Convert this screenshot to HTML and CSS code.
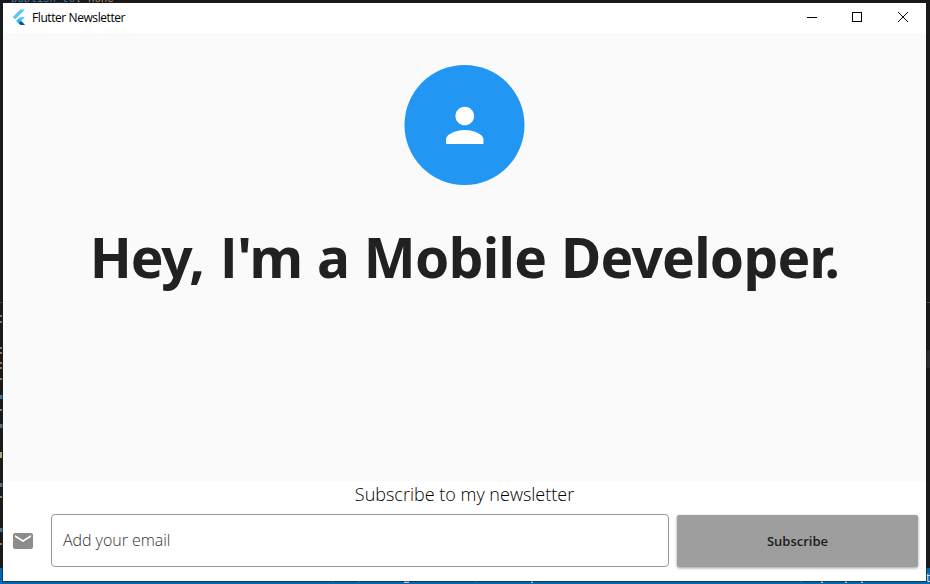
FILE: index.html
```html
<!DOCTYPE html>
<html lang="en">
<head>
<meta charset="utf-8">
<title>Flutter Newsletter</title>
<link rel="stylesheet" href="styles.css">
</head>
<body>
<div class="desktop">
  <div class="code-line"><span class="key">publish_to</span>: <span class="value">none</span></div>
  <div class="rule"></div>
  <div class="active-line"></div>
  <i class="bit" style="top:315px"></i><i class="bit" style="top:321px"></i>
  <i class="bit warm" style="top:347px"></i><i class="bit warm" style="top:352px"></i>
  <i class="bit warm" style="top:362px"></i><i class="bit warm" style="top:367px"></i>
  <i class="bit warm" style="top:378px"></i><i class="bit cool" style="top:395px"></i>
  <i class="bit warm" style="top:409px"></i><i class="bit cool" style="top:424px"></i>
  <i class="bit tall" style="top:452px"></i><i class="bit cool" style="top:483px"></i>
  <i class="bit warm" style="top:496px"></i><i class="bit cool" style="top:528px"></i>
  <i class="bit warm" style="top:543px"></i>
  <div class="statusbar">
    <i class="mark" style="left:332px"></i><i class="mark" style="left:358px"></i><i class="mark low" style="left:404px"></i>
    <i class="mark" style="left:475px"></i><i class="mark low narrow" style="left:531px"></i><i class="mark" style="left:800px"></i>
    <i class="mark low narrow" style="left:821px"></i><i class="mark low narrow" style="left:845px"></i><i class="mark low narrow" style="left:861px"></i>
    <span class="status-text">t</span>
  </div>
</div>
<div class="window">
  <header class="titlebar">
    <svg class="logo" width="14" height="17" viewBox="0 0 14 17">
      <path fill="#54c5f8" d="M8.500.5H13L3.200 10.200.8 8z"/>
      <path fill="#54c5f8" d="M8.500 8H13L9.100 11.800 13 16H8.500L4.300 11.900z"/>
      <path fill="#29b6f6" d="M4.300 11.900l2.400-2.400 2.400 2.400-2.400 2.400z"/>
      <path fill="#01579b" d="M6.700 14.300l2.400-2.400L13 16H8.500z"/>
    </svg>
    <span class="title">Flutter Newsletter</span>
    <svg class="control" width="46" height="30" viewBox="0 0 46 30" shape-rendering="crispEdges"><path d="M19 14.500h10" stroke="#000"/></svg>
    <svg class="control" width="46" height="30" viewBox="0 0 46 30" shape-rendering="crispEdges"><path d="M18.500 9.500h9v9h-9z" stroke="#000" fill="none"/></svg>
    <svg class="control" width="46" height="30" viewBox="0 0 46 30"><path d="M18 9l10 10M28 9L18 19" stroke="#000"/></svg>
  </header>
  <main class="hero">
    <svg class="avatar" width="121" height="120" viewBox="0 0 121 120">
      <circle cx="60.5" cy="60" r="60" fill="#2196f3"/>
      <path transform="translate(32.800 32.300) scale(2.3333)" fill="#fff" d="M12 12c2.210 0 4-1.790 4-4s-1.790-4-4-4-4 1.790-4 4 1.790 4 4 4zm0 2c-2.670 0-8 1.340-8 4v2h16v-2c0-2.660-5.330-4-8-4z"/>
    </svg>
    <h1 class="headline"><span class="hey">Hey,</span> <span class="stem">I</span>'m a Mobile <span class="developer">Developer.</span></h1>
  </main>
  <footer class="newsletter">
    <p class="caption">Subscribe to my newsletter</p>
    <form class="signup">
      <svg class="mail" width="24" height="24" viewBox="0 0 24 24"><path fill="#8c8c8c" d="M20 4H4c-1.100 0-1.990.9-1.990 2L2 18c0 1.100.9 2 2 2h16c1.100 0 2-.9 2-2V6c0-1.100-.9-2-2-2zm0 4l-8 5-8-5V6l8 5 8-5v2z"/></svg>
      <div class="field"><span class="hint">Add your email</span></div>
      <button class="subscribe" type="button">Subscribe</button>
    </form>
  </footer>
</div>
</body>
</html>
```
FILE: styles.css
```css
* { box-sizing: border-box; }
body {
  margin: 0;
  width: 930px;
  height: 584px;
  padding: 3px 4px 3px 3px;
  overflow: hidden;
  background: #1a1a1a;
  font-family: "Open Sans", "Noto Sans", sans-serif;
}
.desktop { position: absolute; inset: 0; overflow: hidden; }
.code-line {
  position: absolute;
  left: 11px;
  top: -8px;
  font: 10.700px/14px "Liberation Mono", monospace;
  color: #aaa;
  white-space: pre;
}
.key { color: #3d80b5; }
.value { color: #c0886d; }
.rule { position: absolute; top: 302px; width: 100%; height: 1px; background: #444; }
.active-line { position: absolute; right: 0; top: 350px; width: 4px; height: 18px; background: #2b2b2f; }
.bit { position: absolute; left: 0; width: 2px; height: 2px; background: #777; }
.warm { background: #a57848; }
.cool { background: #4d7191; height: 4px; width: 3px; }
.tall { background: #a8a584; height: 6px; }
.statusbar { position: absolute; left: 0; right: 0; top: 568px; bottom: 0; background: #0067b0; }
.mark { position: absolute; top: 13px; width: 2px; height: 1px; background: #7194a9; }
.low { width: 5px; height: 2px; background: #b7c6ce; }
.narrow { width: 2px; }
.status-text { position: absolute; left: 926px; top: 2px; font-size: 12px; line-height: 15px; color: #d5e5ef; }
.window {
  position: relative;
  display: flex;
  flex-direction: column;
  width: 923px;
  height: 578px;
  background: #fff;
  box-shadow: 0 0 0 1px rgba(30, 30, 30, .6);
}
.titlebar { display: flex; flex: 0 0 30px; align-items: center; padding-left: 9px; }
.logo { flex: none; margin-top: -1px; }
.title {
  flex: 1;
  margin-left: 6px;
  font-size: 12px;
  line-height: 16px;
  letter-spacing: -.42px;
  color: #000;
}
.control { flex: none; }
.hero {
  display: flex;
  flex: 0 0 448px;
  flex-direction: column;
  align-items: center;
  padding-top: 32px;
  background: #fafafa;
}
.avatar { flex: none; }
.headline {
  margin: 34px 0 0;
  font: 700 55px/75px "Noto Sans", "Open Sans", sans-serif;
  letter-spacing: -.7px;
  word-spacing: 1px;
  white-space: nowrap;
  color: #212121;
}
.hey { letter-spacing: -1.200px; }
.stem { font-family: Roboto, sans-serif; margin: 0 1px 0 2.500px; }
.developer { letter-spacing: -.75px; }
.newsletter { flex: 1; }
.caption {
  margin: -1px 0 0;
  text-align: center;
  font-size: 18px;
  line-height: 28px;
  font-weight: 300;
  color: #000;
}
.signup { display: flex; align-items: center; margin: 6px 8px 0; height: 53px; }
.mail { flex: none; }
.field {
  display: flex;
  align-items: center;
  flex: 0 0 618px;
  height: 53px;
  margin-left: 16px;
  padding: 0 0 1px 11px;
  border: 1px solid #999;
  border-radius: 4px;
}
.hint { font-size: 16px; font-weight: 300; letter-spacing: -.05px; color: #333; }
.subscribe {
  flex: 1;
  height: 52px;
  margin: 0 0 0 8px;
  padding: 0;
  border: 0;
  border-radius: 2px;
  background: #9e9e9e;
  box-shadow: 0 1px 3px rgba(0, 0, 0, .4);
  font: 600 13px/18px "Open Sans", "Noto Sans", sans-serif;
  color: #1c1c1c;
}
```
